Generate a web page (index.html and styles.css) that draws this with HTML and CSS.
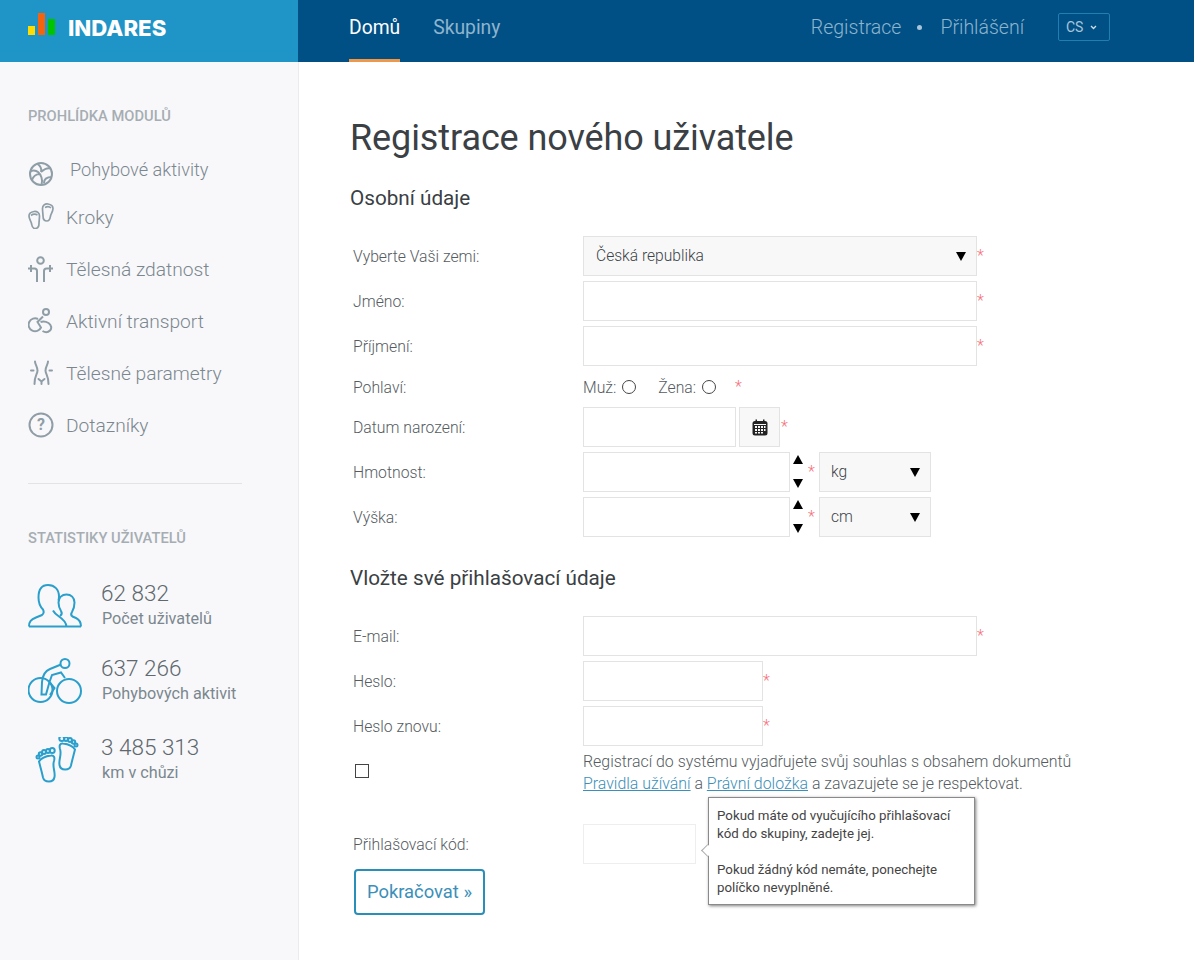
FILE: index.html
```html
<!DOCTYPE html>
<html lang="cs">
<head>
<meta charset="utf-8">
<title>INDARES</title>
<link rel="stylesheet" href="styles.css">
</head>
<body>
<header class="topbar">
  <a class="brand">
    <span class="logo"><i class="bar bar-y"></i><i class="bar bar-o"></i><i class="bar bar-g"></i></span>
    <span class="brand-name">INDARES</span>
  </a>
  <nav class="topnav">
    <div class="topnav-main">
      <a class="tab active">Domů</a>
      <a class="tab">Skupiny</a>
    </div>
    <div class="topnav-user">
      <a class="ulink">Registrace</a>
      <span class="dot"></span>
      <a class="ulink">Přihlášení</a>
      <span class="lang">CS
        <svg class="lang-caret" viewBox="0 0 8 6" width="7" height="5"><path d="M1 1.200 4 4.200 7 1.200" fill="none" stroke="#cfe0ea" stroke-width="1.500"/></svg>
      </span>
    </div>
  </nav>
</header>
<div class="page">
  <aside class="sidebar">
    <h4 class="side-title">PROHLÍDKA MODULŮ</h4>
    <ul class="modules">
      <li class="module first">
        <svg class="micon" viewBox="0 0 26 26"><g class="ms"><circle cx="13" cy="13" r="11"/><path d="M2.500 10c5-1.500 9 .5 11 6.500 .8 2.500.8 5 0 7M9 2.500c3 2 5 5 4 8.500M13 11c3-2.500 6-4.500 9-3.500M4 19c1-3 4-6 8-6M16 22c0-3 2-6 8-6"/></g></svg>
        <span class="mname mname-first">Pohybové aktivity</span>
      </li>
      <li class="module mod-kroky">
        <svg class="micon" viewBox="0 0 26 26"><g class="ms ms-thin"><path d="M1 13c0 3 2 5 2.500 7.500s.5 5 3.500 5 4-2.500 4-5 .5-4.500.5-7.500S9 8 6 8.500 1 10 1 13z"/><path d="M25 5.500c0 3-2 5-2.500 7.500s-.5 5-3.500 5-4-2.500-4-5-.5-4.500-.5-7.500S17 .5 20 1s5 1.500 5 4.500z"/><path d="M3 12.500c2-1.500 4.500-1.500 6.500-.5M17 4.500c2-1 4.500-1 6 .5"/></g></svg>
        <span class="mname">Kroky</span>
      </li>
      <li class="module">
        <svg class="micon" viewBox="0 0 26 26"><g class="ms"><circle cx="12.500" cy="4.500" r="3.300"/><path d="M0 12.500h6.500c1.500 0 2.500 1 2.500 2.500v11M25 12.500h-6.500c-1.500 0-2.500 1-2.500 2.500v11M3 9v7M22 9v7"/></g></svg>
        <span class="mname">Tělesná zdatnost</span>
      </li>
      <li class="module">
        <svg class="micon" viewBox="0 0 26 26"><g class="ms"><circle cx="18" cy="4" r="3"/><path d="M10 11A6.500 6.500 0 1 0 13 19.500L9.500 14 15 8.500M12.500 14c3-1 5.500-.5 8 1 3 2 3.500 5.500 1.500 7.500s-5 2-7.500.5"/></g></svg>
        <span class="mname">Aktivní transport</span>
      </li>
      <li class="module">
        <svg class="micon" viewBox="0 0 26 26"><g class="ms" stroke-linecap="round"><path d="M7 1.500c0 3 2.500 5 2.500 9S6.500 15 6.500 24M20 1.500c0 3-2.500 5-2.500 9s3 4.500 3 13.500M3 10.500h2.500M21.500 10.500H24M10.500 19l3 2.500 3-2.500M13.500 21.500V24"/></g></svg>
        <span class="mname">Tělesné parametry</span>
      </li>
      <li class="module">
        <svg class="micon" viewBox="0 0 26 26"><circle cx="13" cy="13" r="11.500" class="ms"/><text class="qmark" x="13" y="18" text-anchor="middle">?</text></svg>
        <span class="mname">Dotazníky</span>
      </li>
    </ul>
    <hr class="side-sep">
    <h4 class="side-title">STATISTIKY UŽIVATELŮ</h4>
    <ul class="stats">
      <li class="stat">
        <svg class="sicon" viewBox="0 0 54 46"><g class="ss"><path d="M1 43.500C1 38.500 3 36.500 8 34.500L14 32C16 30.500 16 28.500 15 26.500 12 23.500 10.500 19.500 10.500 14.500 10.500 6.500 14 2 20 2 26.500 2 31 6.500 31 13.500 31 15 30.800 16 30.500 17.500"/><path d="M1 43.500H53M38.500 43.500C38 38.500 34 35.500 31 33.500 28 31.500 26 29.500 25 27.500"/><path d="M53 43.500C53 38.500 51 36.500 48 35L44.500 33.500C43 32.500 43 30.500 44 29 45.500 26.500 46.500 23.500 46.500 19.500 46.500 14.500 43 11.500 38.500 11.500 34 11.500 30.500 14.500 30.500 19.500 30.500 22.500 31.500 25.500 33 28 34 29.500 34 31.500 32 33"/></g></svg>
        <div class="stext"><span class="snum">62 832</span><span class="slabel">Počet uživatelů</span></div>
      </li>
      <li class="stat stat-bike">
        <svg class="sicon" viewBox="0 0 54 46"><g class="ss"><circle cx="12.500" cy="32" r="12"/><circle cx="41" cy="33" r="12"/><circle cx="37" cy="5.500" r="4.500"/><path d="M33 6.500 22 11C17 13 14.500 18 14 24L13.500 36.500H18L21.500 24 26.500 30 22 37M21.500 24 24 17 33 14.500 37 20"/></g></svg>
        <div class="stext"><span class="snum">637 266</span><span class="slabel">Pohybových aktivit</span></div>
      </li>
      <li class="stat">
        <svg class="sicon" viewBox="-8 0 54 46"><g class="ss"><path d="M3 24.500c1.500 6 3 11 4 16 1.500 5.500 10.500 5.500 11.500-.5 1-6-2.500-10-.5-16 1-3.500 0-6-3-5.500-4 .5-9.500 2-12 6z"/><circle cx="2" cy="20" r="1.500"/><circle cx="4.500" cy="17" r="1.700"/><circle cx="8" cy="15" r="1.900"/><circle cx="12" cy="14" r="1.900"/><circle cx="16.200" cy="13.500" r="2.500"/><g transform="matrix(-1 0 0 1 42 -12)"><path d="M3 24.500c1.500 6 3 11 4 16 1.500 5.500 10.500 5.500 11.500-.5 1-6-2.500-10-.5-16 1-3.500 0-6-3-5.500-4 .5-9.500 2-12 6z"/><circle cx="2" cy="20" r="1.500"/><circle cx="4.500" cy="17" r="1.700"/><circle cx="8" cy="15" r="1.900"/><circle cx="12" cy="14" r="1.900"/><circle cx="16.200" cy="13.500" r="2.500"/></g></g></svg>
        <div class="stext"><span class="snum">3 485 313</span><span class="slabel">km v chůzi</span></div>
      </li>
    </ul>
  </aside>
  <main class="content">
    <h1 class="title">Registrace nového uživatele</h1>
    <h2 class="section">Osobní údaje</h2>
    <form class="form">
      <div class="row">
        <label class="lbl">Vyberte Vaši zemi:</label>
        <div class="select sel-wide"><span>Česká republika</span><i class="tri"></i></div><span class="req">*</span>
      </div>
      <div class="row"><label class="lbl">Jméno:</label><span class="input w-full"></span><span class="req">*</span></div>
      <div class="row"><label class="lbl">Příjmení:</label><span class="input w-full"></span><span class="req">*</span></div>
      <div class="row row-radio">
        <label class="lbl">Pohlaví:</label>
        <span class="radio-txt">Muž:</span><span class="radio"></span>
        <span class="radio-txt radio-second">Žena:</span><span class="radio"></span>
        <span class="req req-radio">*</span>
      </div>
      <div class="row">
        <label class="lbl">Datum narození:</label>
        <span class="input w-date"></span>
        <span class="cal-btn">
          <svg viewBox="0 0 16 17" width="16" height="17"><rect x="0.500" y="2" width="15" height="14.500" rx="2.500" fill="#222"/><rect x="3.500" y="0.500" width="1.500" height="3" fill="#222"/><rect x="11" y="0.500" width="1.500" height="3" fill="#222"/><g fill="#f7f7f7"><rect x="2" y="5" width="12" height="1"/><rect x="3" y="7" width="2" height="2"/><rect x="6" y="7" width="2" height="2"/><rect x="9" y="7" width="2" height="2"/><rect x="12" y="7" width="1.500" height="2"/><rect x="3" y="10" width="2" height="2"/><rect x="6" y="10" width="2" height="2"/><rect x="9" y="10" width="2" height="2"/><rect x="12" y="10" width="1.500" height="2"/><rect x="3" y="13" width="2" height="1.500"/><rect x="6" y="13" width="2" height="1.500"/><rect x="9" y="13" width="2" height="1.500"/></g></svg>
        </span>
        <span class="req req-cal">*</span>
      </div>
      <div class="row">
        <label class="lbl">Hmotnost:</label>
        <span class="input w-num"></span>
        <span class="spin"><i class="tri tri-up"></i><i class="tri"></i></span>
        <span class="req req-num">*</span>
        <div class="select sel-unit"><span>kg</span><i class="tri"></i></div>
      </div>
      <div class="row">
        <label class="lbl">Výška:</label>
        <span class="input w-num"></span>
        <span class="spin"><i class="tri tri-up"></i><i class="tri"></i></span>
        <span class="req req-num">*</span>
        <div class="select sel-unit"><span>cm</span><i class="tri"></i></div>
      </div>
      <h2 class="section section-login">Vložte své přihlašovací údaje</h2>
      <div class="row"><label class="lbl">E-mail:</label><span class="input w-full"></span><span class="req">*</span></div>
      <div class="row"><label class="lbl">Heslo:</label><span class="input w-pass"></span><span class="req">*</span></div>
      <div class="row"><label class="lbl">Heslo znovu:</label><span class="input w-pass"></span><span class="req">*</span></div>
      <div class="row row-terms">
        <div class="lbl"><span class="check"></span></div>
        <p class="terms">Registrací do systému vyjadřujete svůj souhlas s obsahem dokumentů<br><a class="tlink">Pravidla užívání</a> a <a class="tlink">Právní doložka</a> a zavazujete se je respektovat.</p>
      </div>
      <div class="row row-code">
        <label class="lbl">Přihlašovací kód:</label>
        <span class="input w-code"></span>
        <div class="tooltip">
          <i class="tip-arrow"></i>
          <p>Pokud máte od vyučujícího přihlašovací kód do skupiny, zadejte jej.</p>
          <p>Pokud žádný kód nemáte, ponechejte políčko nevyplněné.</p>
        </div>
      </div>
      <button type="button" class="submit">Pokračovat »</button>
    </form>
  </main>
</div>
</body>
</html>
```
FILE: styles.css
```css
* { box-sizing: border-box; }
html, body { margin: 0; padding: 0; }
body {
  font-family: Roboto, "Liberation Sans", sans-serif;
  font-weight: 300;
  color: #3c4449;
  background: #fff;
  height: 960px;
  overflow: hidden;
}
.topbar { display: flex; height: 62px; }
.brand {
  width: 298px;
  background: #1f94c6;
  display: flex;
  align-items: center;
  padding-left: 28px;
  flex: none;
}
.logo { display: flex; align-items: flex-end; height: 22px; gap: 3px; margin-right: 13px; margin-bottom: 14px; }
.bar { display: block; width: 7px; }
.bar-y { height: 9px; background: #ffdd00; }
.bar-o { height: 22px; background: #f4640f; }
.bar-g { height: 16px; background: #00c400; }
.brand-name { color: #fff; font-family: Inter, "Open Sans", sans-serif; font-weight: 800; font-size: 22.2px; margin-bottom: 8px; }
.topnav { flex: 1; background: #005086; display: flex; justify-content: space-between; padding-left: 51px; padding-right: 84px; }
.topnav-main { display: flex; gap: 33px; }
.tab { color: #8fb4cd; font-size: 19.3px; line-height: 55px; height: 62px; font-weight: 400; border-bottom: 3px solid transparent; }
.tab.active { color: #fff; border-bottom-color: #f0984a; }
.topnav-user { display: flex; align-items: center; height: 54px; }
.ulink { color: #8fb4cd; font-size: 19.5px; }
.dot { width: 5px; height: 5px; border-radius: 50%; background: #a9c5d8; margin: 0 18px 0 16px; }
.lang { margin-left: 34px; width: 52px; height: 28px; border: 1px solid #1f7fb0; border-radius: 2px; color: #a9c5d8; font-size: 14px; font-weight: 400; display: flex; align-items: center; padding-left: 7px; gap: 7px; }
.page { display: flex; height: 898px; }
.sidebar { width: 299px; flex: none; background: #f8f8fb; border-right: 1px solid #ebebee; padding: 45px 0 0 28px; }
.side-title { margin: 0; font-size: 14.7px; font-weight: 500; color: #a6adb2; line-height: 18px; }
.modules { list-style: none; margin: 20px 0 0; padding: 0; }
.module { display: flex; align-items: center; height: 52px; color: #7b878e; font-size: 19.2px; }
.module.first { height: 46px; }
.module.first .micon { margin-top: 12px; }
.mod-kroky .micon { margin-bottom: 2px; }
.micon { width: 26px; height: 26px; margin-right: 12px; flex: none; }
.ms { fill: none; stroke: #8f9ea6; stroke-width: 2; }
.ms-thin { stroke-width: 1.700; }
.ss { fill: none; stroke: #2b9fcb; stroke-width: 2; }
.qmark { font-size: 16px; font-weight: 700; fill: #8f9ea6; }
.mname-first { margin-left: 4px; margin-top: 2px; font-size: 18.2px; }
.side-sep { width: 214px; margin: 32px 0 45px; border: 0; border-top: 1px solid #e3e3e6; }
.stats { list-style: none; margin: 33px 0 0; padding: 0; }
.stat { display: flex; align-items: center; height: 52px; margin-bottom: 23px; }
.stat-bike { margin-bottom: 27px; }
.sicon { width: 54px; height: 46px; flex: none; margin-right: 19px; }
.stext { display: flex; flex-direction: column; }
.snum { font-size: 22.5px; line-height: 26px; color: #5e686e; }
.slabel { font-size: 16.2px; font-weight: 400; line-height: 26px; color: #7b878e; margin-left: 1px; }
.content { flex: 1; padding: 51px 0 0 51px; }
.title { margin: 0; font-size: 36px; font-weight: 400; line-height: 50px; color: #3a4044; letter-spacing: -0.1px; }
.section { margin: 23px 0 26px; font-size: 20.7px; font-weight: 400; line-height: 24px; color: #3a4044; }
.section-login { margin: 29px 0 26px; }
.row { display: flex; align-items: center; min-height: 40px; margin-bottom: 5px; padding-left: 3px; font-size: 15.75px; }
.lbl { width: 230px; flex: none; color: #555c61; font-size: 15.75px; }
.input { display: block; height: 40px; border: 1px solid #e3e3e3; background: #fff; flex: none; }
.w-full { width: 394px; }
.w-date { width: 153px; }
.w-num { width: 207px; }
.w-pass { width: 180px; }
.w-code { width: 113px; border-color: #eee; }
.req { color: #f76f7b; font-size: 16px; align-self: flex-start; line-height: 40px; width: 7px; }
.select { display: flex; align-items: center; justify-content: space-between; height: 40px; background: #f8f8f8; border: 1px solid #e3e3e3; flex: none; padding: 0 10px 0 11px; color: #3c4449; font-size: 15.6px; font-weight: 300; }
.sel-wide { width: 394px; padding-left: 12px; }
.sel-unit { width: 112px; margin-left: 4px; }
.tri { display: block; width: 0; height: 0; border-left: 5.500px solid transparent; border-right: 5.500px solid transparent; border-top: 9px solid #000; }
.tri-up { border-top: 0; border-bottom: 9px solid #000; }
.spin { width: 15px; height: 40px; display: flex; flex-direction: column; align-items: center; justify-content: space-between; padding: 3px 0 4px; flex: none; }
.req-num { margin-left: 3px; }
.row-radio { min-height: 20px; margin: 11px 0 10px; }
.radio-txt { color: #555c61; }
.radio { width: 14px; height: 14px; border: 1px solid #444; border-radius: 50%; margin-left: 6px; }
.radio-second { margin-left: 22px; }
.req-radio { margin-left: 19px; line-height: 20px; align-self: center; }
.cal-btn { width: 41px; height: 40px; border: 1px solid #e3e3e3; background: #f8f8f8; margin-left: 3px; display: flex; align-items: center; justify-content: center; flex: none; }
.req-cal { margin-left: 1px; }
.row-terms { align-items: flex-start; margin-top: 5px; margin-bottom: 0; min-height: 50px; }
.row-terms .lbl { padding-top: 13px; }
.check { display: block; width: 14px; height: 14px; border: 1px solid #444; margin-left: 2px; }
.terms { margin: 0; font-size: 15.9px; line-height: 22px; color: #555c61; }
.tlink { color: #3c8fb8; text-decoration: underline; }
.row-code { margin-top: 23px; position: relative; }
.tooltip { position: absolute; left: 358px; top: -27px; width: 267px; height: 108px; background: #fff; border: 1px solid #8a8a8a; box-shadow: 1px 1px 3px rgba(0,0,0,.5); padding: 9px 8px 0 8px; font-size: 13.3px; line-height: 18px; font-weight: 400; color: #444; z-index: 2; }
.tooltip p { margin: 0 0 18px; }
.tip-arrow { position: absolute; left: -6px; top: 48px; width: 9px; height: 9px; background: #fff; border-left: 1px solid #aaa; border-bottom: 1px solid #aaa; transform: rotate(45deg); }
.submit { margin-left: 4px; width: 131px; height: 46px; background: #fff; border: 2px solid #2a8fb8; border-radius: 4px; color: #3c8fb8; font-family: inherit; font-size: 18.4px; font-weight: 400; padding: 0 0 2px; }
```
